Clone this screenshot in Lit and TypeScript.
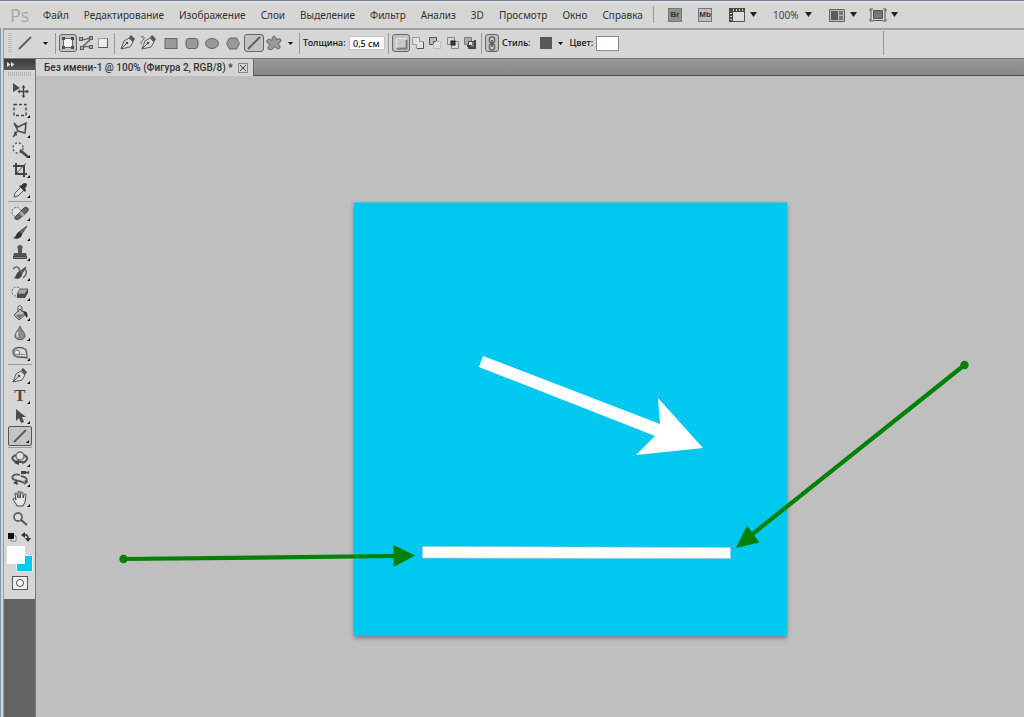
import { LitElement, html, svg, css } from "lit";
import { customElement, state } from "lit/decorators.js";
import { classMap } from "lit/directives/class-map.js";

const MENU = ["Файл", "Редактирование", "Изображение", "Слои", "Выделение", "Фильтр", "Анализ", "3D", "Просмотр", "Окно", "Справка"];

const penNib = svg`<path d="M2 15 5 7l5-3 4 4-3 5z" fill="#dcdcdc" stroke="#5c5c5c"/><path d="m2 15 5-5" stroke="#4c4c4c"/><circle cx="8" cy="9" r="1.3" fill="#4c4c4c"/><path d="m10 3 2-2 4 4-2 3z" fill="#555"/>`;

const ICONS: Record<string, unknown> = {
  line: svg`<path d="M3 15 15 3" stroke="#5a5a5a" stroke-width="1.8"/>`,
  shapeLayer: svg`<rect x="4.5" y="4.5" width="9" height="9" fill="#f4f4f4" stroke="#666"/><path d="M3 3h3v3H3zM12 3h3v3h-3zM3 12h3v3H3zM12 12h3v3h-3z" fill="#4c4c4c"/>`,
  paths: svg`<path d="M4 5c4 2 6-1 10-1-1 4-7 5-9 10 4-3 5-1 9-1" fill="none" stroke="#666" stroke-width="1.5"/><path d="M2 3h4v4H2zM12 2h4v4h-4zM3 12h4v4H3zM12 11h4v4h-4z" fill="#5c5c5c"/><path d="M3 4h2v2H3zM13 3h2v2h-2zM4 13h2v2H4zM13 12h2v2h-2z" fill="#aaa"/>`,
  fillPixels: svg`<rect x="4.5" y="4.5" width="9" height="9" fill="#ececec" stroke="#999"/><path d="M4.5 13.5h9v-9" fill="none" stroke="#555"/>`,
  pen: penNib,
  freePen: svg`<g>${penNib}</g><path d="M1 3c3-1 4 1 2 3s-3 3-1 4" fill="none" stroke="#555"/>`,
  rect: svg`<rect x="3" y="4.5" width="12" height="10" fill="#999" stroke="#666"/>`,
  roundRect: svg`<rect x="3" y="4.5" width="12" height="10" rx="3" fill="#999" stroke="#666"/>`,
  ellipse: svg`<ellipse cx="9" cy="9.5" rx="6.5" ry="5" fill="#999" stroke="#666"/>`,
  polygon: svg`<path d="m5.5 4h7l3 5.5-3 5.5h-7l-3-5.5z" fill="#999" stroke="#666"/>`,
  custom: svg`<path d="M8 2.500c2-1 3 1 3 3 2-1 5-1 5 1s-2 2-3 3c2 2 3 4 1 5s-3-1-4-2c-2 2-4 4-6 3s0-4 1-5c-2-1-4-2-3-4s3-1 5 0c0-1 0-3 1-4z" fill="#999" stroke="#5c5c5c"/>`,
  newLayer: svg`<rect x="4.5" y="4.5" width="9" height="9" fill="#c8c8c8" stroke="#e6e6e6"/><path d="M5 14.500h9.500V6" fill="none" stroke="#777" stroke-width="2"/>`,
  add: svg`<path d="M3.500 3.500h7v4h4v7h-7v-4h-4z" fill="#e2e2e2" stroke="#999"/><path d="M8 14.500h6.500V8" fill="none" stroke="#555"/>`,
  subtract: svg`<path d="M3.500 10.500v-7h7v4h-3v3z" fill="#bbb" stroke="#555"/><path d="M10 7.500h4.500v7h-7V10" fill="#e0e0e0" stroke="#bbb"/>`,
  intersect: svg`<path d="M3.500 3.500h7v7h-7zM7.500 7.500h7v7h-7z" fill="none" stroke="#888"/><path d="M7.500 7.500h3v3h-3z" fill="#bbb" stroke="#222" stroke-width="2"/>`,
  exclude: svg`<path d="M3.500 3.500h7v7h-7z" fill="#aaa" stroke="#777"/><path d="M7.500 7.500h7v7h-7z" fill="#777" stroke="#444"/><path d="M6 12h3v2h5V6" fill="none" stroke="#444" stroke-width="2"/><path d="M8 8h3v3H8z" fill="#e2e2e2"/>`,
  link: svg`<rect x="6.5" y="3" width="5" height="6" rx="2" fill="#ccc" stroke="#666" stroke-width="1.5"/><rect x="6.5" y="10" width="5" height="6" rx="2" fill="#ccc" stroke="#666" stroke-width="1.5"/><path d="M9 6v7" stroke="#555" stroke-width="1.5"/>`,
  film: svg`<path d="M1.500 2.500h15v13h-15z" fill="#dadada" stroke="#555"/><path d="M1 2h16v4H5v10H1z" fill="#4a4a4a"/><path d="M5 3h1v2H5zM8 3h1v2H8zM11 3h1v2h-1zM14 3h1v2h-1zM2 7h2v1H2zM2 10h2v1H2zM2 13h2v1H2z" fill="#ccc"/>`,
  arrange: svg`<path d="M1.500 3.500h15v12h-15z" fill="#bbb" stroke="#666"/><path d="M3 5h7v9H3z" fill="#5c5c5c"/><path d="M11 5h4v4h-4zM11 10h4v4h-4z" fill="#777"/>`,
  screen: svg`<path d="M4.500 4.500h9v8h-9z" fill="#777" stroke="#555"/><path d="M1 5V3h3M14 3h3v2M17 13v2h-3M4 15H1v-2M2 4v10M16 4v10M4 14.500h10" fill="none" stroke="#555"/>`,
  move: svg`<path d="m2 2 7 5-7 4z" fill="#4c4c4c"/><path d="M12.500 6v9M8 10.500h9" stroke="#444" stroke-width="1.400"/><path d="m12.500 4 2 2.500h-4zM12.500 17l2-2.500h-4zM6.500 10.500 9 8.500v4zM18 10.500l-2.500-2v4z" fill="#444"/>`,
  marquee: svg`<rect x="3" y="3.500" width="12" height="11" fill="none" stroke="#444" stroke-width="1.400" stroke-dasharray="3 2"/>`,
  lasso: svg`<path d="m3 2 4 4 8-4-1 10-7-2-4-8zM6 11c-3 0-3 3 0 3M6 11l-4 5" fill="none" stroke="#4c4c4c" stroke-width="1.500"/>`,
  wand: svg`<circle cx="7" cy="7" r="5" fill="#ddd" stroke="#666" stroke-width="1.600" stroke-dasharray="2 2"/><path d="m9 9 8 7" stroke="#444" stroke-width="2.400"/>`,
  crop: svg`<path d="M5 2v11h11M2 5h11v11" fill="none" stroke="#444" stroke-width="2"/><path d="m6 12 9-10" stroke="#555"/>`,
  eyedropper: svg`<path d="m3 16 1-4 6-6 3 3-6 6z" fill="#ddd" stroke="#555"/><path d="m8 5 6 6 1-2-1-2c3-2 2-5 0-5s-3 1-3 2z" fill="#333"/>`,
  heal: svg`<circle cx="5.5" cy="8" r="4.5" fill="#e6e6e6" stroke="#666" stroke-dasharray="2 1"/><path d="m5 12 8-8c3-2 6 1 3 4l-8 7c-3 2-6-1-3-3z" fill="#666" stroke="#444"/><path d="m8 9 4 4 2-2-4-4z" fill="#aaa"/>`,
  brush: svg`<path d="M16 2 8 8l2 3z" fill="#777" stroke="#444"/><path d="M9 8c-4-1-3 5-7 6 4 2 9 0 9-4z" fill="#333"/>`,
  stamp: svg`<path d="M9 1c3 0 3 3 2 4v4h4l1 4H2l1-4h4V5C6 4 6 1 9 1z" fill="#555"/><path d="M2.500 12.500h13v2h-13z" fill="#888" stroke="#444"/>`,
  history: svg`<path d="M2 5c4-4 7-1 6 2M12 14c4-3 4-7 2-9" fill="none" stroke="#666" stroke-width="1.400"/><path d="M15 3 8 8l2 3z" fill="#666" stroke="#444"/><path d="M9 8c-4-1-3 4-6 6 4 2 8 0 8-4z" fill="#444"/>`,
  eraser: svg`<circle cx="5.5" cy="7.5" r="4.5" fill="#ddd" stroke="#555" stroke-dasharray="2 1.5"/><path d="M9 5h8l-3 5H6z" fill="#aaa" stroke="#666"/><path d="M6 10h8l3-5v4l-3 5H6z" fill="#4c4c4c"/>`,
  bucket: svg`<path d="m3 11 6-6 6 5-7 6z" fill="#bbb" stroke="#555"/><path d="M7 8V3c0-2 4-2 4 1v4" fill="none" stroke="#555"/><path d="M12 7c5 0 5 4 4 7l-3-4z" fill="#333"/><path d="m5 11 3 4 6-5z" fill="#777"/>`,
  blur: svg`<path d="M9 2c1 4 5 6 5 10 0 5-10 5-10 0 0-4 4-6 5-10z" fill="#8c8c8c" stroke="#5c5c5c"/><path d="M7 8c-2 3-1 4 0 5" fill="none" stroke="#ddd" stroke-width="1.5"/>`,
  sponge: svg`<path d="M2 8c0-5 9-6 13-2 1 3 1 5 1 8-3-1-7-1-10-1-3-1-4-2-4-5z" fill="#ddd" stroke="#555" stroke-width="1.3"/><circle cx="6" cy="8.5" r="2.5" fill="#eee" stroke="#666"/><path d="M8 11c2-1 4-1 6 0" stroke="#777"/>`,
  pathSelect: svg`<path d="M5 2v12l3-3 2 5 3-1-2-5h4z" fill="#4c4c4c"/>`,
  rotate3d: svg`<path d="M5 5c-6 2-4 6 2 7h6M13 5c6 3 2 7-2 8" fill="none" stroke="#555" stroke-width="2"/><circle cx="9" cy="6" r="4" fill="#e2e2e2" stroke="#666" stroke-width="1.3"/><path d="M8 9v6l-5-2z" fill="#444"/>`,
  camera3d: svg`<path d="M9 5C3 3 0 7 2 9s8 1 11 4M10 6c5 1 7 3 5 6" fill="none" stroke="#555" stroke-width="1.8"/><path d="m6 10 1 5-5-2zM14 10l3 2-4 3z" fill="#444"/><path d="M10 1h5v3h-5zM15 2l3-1v3l-3-1z" fill="#444"/>`,
  hand: svg`<path d="M6 16C5 13 2 10 2 9s2-1 3 1L4 4c0-2 2-1 2 0l1 4V2c0-1 2-1 2 0v6l1-5c0-2 2-1 2 0v5l1-3c1-2 2-1 2 0l-1 7-2 4z" fill="#e6e6e6" stroke="#444"/>`,
  zoom: svg`<circle cx="7" cy="7" r="4" fill="#ddd" stroke="#666" stroke-width="1.8"/><path d="m10 10 6 5" stroke="#555" stroke-width="2.2"/>`,
};

const icon = (name: string) => html`<svg width="18" height="18" viewBox="0 0 18 18" fill="none" aria-hidden="true">${ICONS[name]}</svg>`;
const caret = () => html`<svg width="7" height="5" viewBox="0 0 7 5" aria-hidden="true"><path d="M0 0h7L3.500 5z" fill="#222"/></svg>`;
const smallCaret = () => html`<svg width="5" height="3" viewBox="0 0 5 3" aria-hidden="true"><path d="M0 0h5L2.500 3z" fill="#111"/></svg>`;

const TOOL_GROUPS: [string, string][][] = [
  [["move", "Перемещение"], ["marquee", "Прямоугольная область"], ["lasso", "Лассо"], ["wand", "Быстрое выделение"], ["crop", "Рамка"], ["eyedropper", "Пипетка"]],
  [["heal", "Восстанавливающая кисть"], ["brush", "Кисть"], ["stamp", "Штамп"], ["history", "Архивная кисть"], ["eraser", "Ластик"], ["bucket", "Заливка"], ["blur", "Размытие"], ["sponge", "Губка"]],
  [["pen", "Перо"], ["type", "Текст"], ["pathSelect", "Выделение контура"], ["line", "Линия"]],
  [["rotate3d", "Поворот 3D"], ["camera3d", "Камера 3D"], ["hand", "Рука"], ["zoom", "Масштаб"]],
];

const base = css`
  :host, * { box-sizing: border-box; }
  button { border: 0; background: none; padding: 0; margin: 0; font: inherit; color: inherit; display: flex; align-items: center; justify-content: center; flex: none; }
  svg { display: block; flex: none; }
`;

@customElement("menu-bar")
class MenuBar extends LitElement {
  static styles = [base, css`
    :host { display: block; border-top: 1px solid #75839a; background: linear-gradient(#e2e2e2, #d6d6d6 4px); font: 10px/14px "Noto Sans", sans-serif; color: #333; }
    .bar { display: flex; align-items: center; height: 27px; padding-left: 10px; }
    .logo { width: 33px; font: 18px/26px "Open Sans", sans-serif; color: #a6a6a6; }
    nav { display: flex; gap: 15px; width: 610px; }
    .divider { width: 1px; height: 17px; background: #999; margin-right: 14px; }
    .app { width: 14px; height: 14px; border: 1px solid #777; font: bold 8px/12px "Liberation Sans", sans-serif; margin-right: 16px; }
    .bridge { background: #8f8f8f; }
    .mini { background: #bdbdbd; }
    .drop { gap: 4px; margin-right: 12px; }
    label { display: flex; align-items: center; margin: 0 16px 0 4px; }
    select { appearance: none; border: 0; padding: 0; background: none; font: 10px/14px "Noto Sans", sans-serif; color: #444; width: 32px; }
  `];
  render() {
    return html`<div class="bar">
      <span class="logo">Ps</span>
      <nav>${MENU.map((m) => html`<button>${m}</button>`)}</nav>
      <span class="divider"></span>
      <button class="app bridge">Br</button>
      <button class="app mini">Mb</button>
      <button class="drop" aria-label="Вспомогательные элементы">${icon("film")}${caret()}</button>
      <label><select aria-label="Масштаб"><option>100%</option></select>${caret()}</label>
      <button class="drop" aria-label="Упорядочить документы">${icon("arrange")}${caret()}</button>
      <button class="drop" aria-label="Режим экрана">${icon("screen")}${caret()}</button>
    </div>`;
  }
}

@customElement("options-bar")
class OptionsBar extends LitElement {
  @state() private thickness = "0,5 см";
  static styles = [base, css`
    :host { display: block; border-top: 2px solid #a0a0a0; border-bottom: 1px solid #777; background: #d6d6d6; font: 500 9px/14px "Noto Sans", sans-serif; color: #111; }
    .bar { display: flex; align-items: center; height: 28px; padding: 0 137px 2px 4px; }
    .grip { width: 4px; height: 20px; background: repeating-linear-gradient(#bcbcbc 0 1px, transparent 1px 2px); }
    .sep { width: 1px; height: 21px; margin: 0 3px; background: #999; flex: none; }
    .last { margin-left: auto; height: 24px; }
    button { height: 18px; overflow: hidden; }
    .w12 { width: 12px; } .w14 { width: 14px; } .w16 { width: 16px; } .w18 { width: 18px; } .w20 { width: 20px; } .w22 { width: 22px; } .w26 { width: 26px; }
    .on { border: 1px solid #666; border-radius: 3px; background: #c2c2c2; }
    .label { margin-left: 3px; }
    .thick { width: 43px; }
    .text { width: 36px; height: 14px; border: 1px solid #c4c4c4; background: #fff; padding: 0 3px; font: 500 9px/12px "Noto Sans", sans-serif; color: #111; margin-left: 3px; }
    .style { width: 12px; height: 12px; background: #585858; margin: 0 3px 0 9px; }
    .color { appearance: none; width: 23px; height: 15px; padding: 0; margin-left: 3px; border: 1px solid #8c8c8c; background: #fff; }
    .color::-webkit-color-swatch-wrapper { padding: 0; }
    .color::-webkit-color-swatch { border: 0; }
  `];
  private b(name: string, label: string, w: number, on = false) {
    return html`<button class=${classMap({ ["w" + w]: true, on })} aria-label=${label} aria-pressed=${on}>${icon(name)}</button>`;
  }
  render() {
    return html`<div class="bar">
      <span class="grip"></span>
      ${this.b("line", "Инструмент", 26)}<button class="w14" aria-label="Наборы">${smallCaret()}</button>
      <span class="sep"></span>
      ${this.b("shapeLayer", "Слой-фигура", 18, true)}${this.b("paths", "Контуры", 18)}${this.b("fillPixels", "Выполнить заливку", 16)}
      <span class="sep"></span>
      ${this.b("pen", "Перо", 20)}${this.b("freePen", "Свободное перо", 22)}${this.b("rect", "Прямоугольник", 22)}${this.b("roundRect", "Скругленный прямоугольник", 20)}${this.b("ellipse", "Эллипс", 20)}${this.b("polygon", "Многоугольник", 22)}${this.b("line", "Линия", 20, true)}${this.b("custom", "Произвольная фигура", 20)}<button class="w12" aria-label="Параметры">${smallCaret()}</button>
      <span class="sep"></span>
      <label class="thick" for="thickness">Толщина:</label>
      <input class="text" id="thickness" type="text" .value=${this.thickness} @input=${(e: InputEvent) => { this.thickness = (e.target as HTMLInputElement).value; }} />
      <span class="sep"></span>
      ${this.b("newLayer", "Новый слой", 18, true)}${this.b("add", "Добавить", 16)}${this.b("subtract", "Вычесть", 18)}${this.b("intersect", "Пересечение", 18)}${this.b("exclude", "Исключить", 16)}
      <span class="sep"></span>
      ${this.b("link", "Связать", 14, true)}
      <span class="label">Стиль:</span>
      <button class="style" aria-label="Стиль"></button><button class="w12" aria-label="Список стилей">${smallCaret()}</button>
      <label class="label" for="color">Цвет:</label>
      <input class="color" id="color" type="color" value="#ffffff" />
      <span class="sep last"></span>
    </div>`;
  }
}

@customElement("tool-panel")
class ToolPanel extends LitElement {
  @state() private active = "line";
  static styles = [base, css`
    :host { display: block; flex: none; width: 32px; background: #636363; border-right: 1px solid #7a7a7a; }
    .head { width: 100%; height: 11px; justify-content: flex-start; padding-left: 3px; background: linear-gradient(#3c3c3c, #585858); }
    .panel { background: #d6d6d6; padding-bottom: 9px; }
    .grip { height: 10px; padding: 2px 4px 0; }
    .grip i { display: block; height: 4px; background: repeating-linear-gradient(90deg, #b4b4b4 0 1px, transparent 1px 2px); }
    .group { margin: 0 3px 0 4px; }
    .group + .group { border-top: 1px solid #999; margin-top: 1px; padding-top: 1px; }
    .tool { width: 24px; height: 20px; position: relative; font: bold 17px/18px "Liberation Serif", serif; color: #4a4a4a; }
    .more::after { content: ""; position: absolute; right: 2px; bottom: 2px; border-left: 3px solid transparent; border-bottom: 3px solid #111; }
    .on { border: 1px solid #555; border-radius: 2px; background: #c4c4c4; }
    .mini { display: flex; justify-content: space-between; padding: 3px 4px 4px 3px; }
    .colors { display: grid; grid-template: 9px 9px 8px / 9px 9px 8px; margin-left: 3px; }
    .fg { grid-area: 1 / 1 / 3 / 3; background: #fff; z-index: 1; }
    .bg { grid-area: 2 / 2 / 4 / 4; background: #00c8ee; border: 1px solid #eee; }
    .mask { width: 16px; height: 14px; margin: 4px 0 0 8px; border: 1px solid #555; background: #eee; }
  `];
  render() {
    return html`
      <button class="head" aria-label="Свернуть панель"><svg width="8" height="5" viewBox="0 0 8 5"><path d="m0 0 3.500 2.500L0 5zM4 0l3.500 2.500L4 5z" fill="#ddd"/></svg></button>
      <div class="panel">
        <div class="grip"><i></i></div>
        ${TOOL_GROUPS.map((g) => html`<div class="group">${g.map(([id, label]) => html`<button
          class=${classMap({ tool: true, on: id === this.active, more: id !== "move" && id !== "zoom" })}
          aria-label=${label} aria-pressed=${id === this.active} @click=${() => { this.active = id; }}>${id === "type" ? "T" : icon(id)}</button>`)}</div>`)}
        <div class="mini">
          <button aria-label="Цвета по умолчанию"><svg width="10" height="10" viewBox="0 0 10 10"><path d="M4 4h5v5H4z" fill="#fff" stroke="#777"/><path d="M1 1h6v6H1z" fill="#111"/></svg></button>
          <button aria-label="Поменять цвета"><svg width="10" height="10" viewBox="0 0 10 10"><path d="M3 3c3-1 4 1 4 4" fill="none" stroke="#333" stroke-width="1.5"/><path d="m0 3 4-3v6zM7 10 4 6h6z" fill="#333"/></svg></button>
        </div>
        <div class="colors"><button class="fg" aria-label="Основной цвет"></button><button class="bg" aria-label="Фоновый цвет"></button></div>
        <button class="mask" aria-label="Быстрая маска"><svg width="12" height="10" viewBox="0 0 12 10"><circle cx="6" cy="5" r="3.5" fill="#fff" stroke="#444"/></svg></button>
      </div>`;
  }
}

@customElement("document-view")
class DocumentView extends LitElement {
  static styles = [base, css`
    :host { display: flex; flex-direction: column; min-width: 0; flex: 1; }
    .tabs { display: flex; flex: none; height: 17px; background: linear-gradient(#999, #888); border-bottom: 1px solid #4e4e4e; }
    .tab { display: flex; align-items: center; gap: 5px; height: 17px; padding: 0 5px 0 8px; background: #d4d4d4; border-right: 1px solid #666; font: 500 10px/16px "Roboto", sans-serif; color: #333; white-space: nowrap; }
    .close { width: 10px; height: 10px; border: 1px solid #888; }
    .stage { flex: 1; min-height: 0; overflow: hidden; background: #bfbfbf; }
    .board { filter: drop-shadow(0 2px 2px #777); }
  `];
  render() {
    return html`
      <div class="tabs"><div class="tab"><span>Без имени-1 @ 100% (Фигура 2, RGB/8) *</span><button class="close" aria-label="Закрыть"><svg width="6" height="6" viewBox="0 0 6 6"><path d="m0 0 6 6M6 0 0 6" stroke="#444"/></svg></button></div></div>
      <div class="stage">
        <svg width="988" height="641" viewBox="36 76 988 641" role="img" aria-label="Холст">
          <rect class="board" x="354" y="202.500" width="433" height="433.500" fill="#00c8ef"/>
          <path d="m479 367 4-11 177 68-2-26 45 50-67 7 19-19z" fill="#fff"/>
          <path d="m422.500 546.500 308 1v11l-308-.5z" fill="#fff" stroke="#a9c4cc" stroke-width=".6"/>
          <g fill="#038103" stroke="none">
            <circle cx="123.500" cy="559" r="4.200"/><path d="m393.500 545 21.500 10.500-21.500 11.500z"/>
            <circle cx="964.500" cy="365" r="4.200"/><path d="m747 525.500 12.500 17-23.500 5.500z"/>
          </g>
          <path d="m123.500 559 271-3M964.500 365 750 536" stroke="#038103" stroke-width="4.200"/>
        </svg>
      </div>`;
  }
}

@customElement("app-root")
class AppRoot extends LitElement {
  static styles = css`
    :host { display: flex; flex-direction: column; height: 100vh; overflow: hidden; background: #d6d6d6; }
    .frame { flex: 1; min-height: 0; display: flex; flex-direction: column; border-left: 1px solid #8296b0; padding-left: 2px; }
    .window { flex: 1; min-height: 0; display: flex; flex-direction: column; border-left: 1px solid #999; }
    .work { flex: 1; min-height: 0; display: flex; }
  `;
  render() {
    return html`
      <menu-bar></menu-bar>
      <div class="frame"><div class="window">
        <options-bar></options-bar>
        <div class="work"><tool-panel></tool-panel><document-view></document-view></div>
      </div></div>`;
  }
}
